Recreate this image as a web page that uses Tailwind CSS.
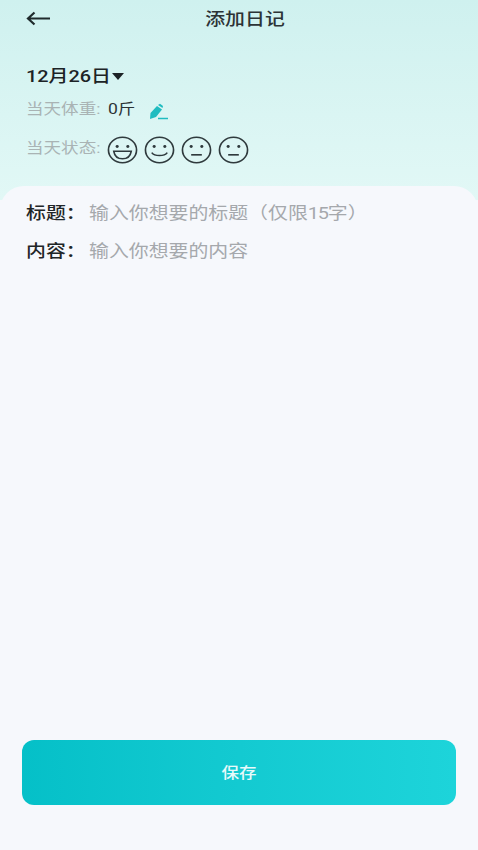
<!DOCTYPE html>
<html lang="en">
<head>
    <meta charset="UTF-8">
    <meta name="viewport" content="width=device-width, initial-scale=1.0">
    <title>添加日记</title>
    <script src="https://cdn.jsdelivr.net/npm/@tailwindcss/browser@4"></script>
</head>
<body class="bg-[#f6f8fc]">
    <div class="w-[478px] h-[850px] overflow-hidden flex flex-col font-['Roboto','Noto_Sans_CJK_SC',sans-serif] bg-gradient-to-b from-[#cff1ef] to-[#e2f8f6] bg-[length:100%_200px] bg-no-repeat">
        <!-- header -->
        <div class="relative h-[38px] flex items-center justify-center pl-[12px]">
            <svg class="absolute left-[26px] top-[11px]" width="24" height="15" viewBox="0 0 24 15" fill="none" stroke="#1f2a2c" stroke-width="2.200">
                <path d="M24 7.500H2M8.500 1.500L2 7.500L8.500 13.500" />
            </svg>
            <span class="text-[17px] font-medium text-[#2c3336] scale-x-[1.17] mt-[1px]">添加日记</span>
        </div>

        <div class="pl-[26px] pt-[26px] h-[148px]">
            <div class="flex items-center h-[24px]">
                <span class="w-[85px] shrink-0 whitespace-nowrap origin-left scale-x-[1.17] text-[17px] font-medium text-[#1c2326] leading-none">12月26日</span>
                <span class="ml-[1px] w-0 h-0 border-x-[6px] border-x-transparent border-t-[7px] border-t-[#1c2326]"></span>
            </div>
            <div class="flex items-center h-[24px] mt-[9px]">
                <span class="w-[82px] shrink-0 whitespace-nowrap origin-left scale-x-[1.17] text-[15px] text-[#a9b3b4]">当天体重:</span>
                <span class="w-[41px] shrink-0 whitespace-nowrap origin-left scale-x-[1.17] text-[15px] text-[#2c3336]">0斤</span>
                <svg class="mt-[5px]" width="20" height="18" viewBox="0 0 20 18">
                    <path d="M1 16L1.500 10L8 3L13 6.500L7 14Z" fill="#1fbcc0" />
                    <path d="M9 2L11 0.800L14 3L13.500 5Z" fill="#1fbcc0" />
                    <path d="M9 15.500H19" stroke="#1fbcc0" stroke-width="1.500" fill="none" />
                </svg>
            </div>
            <div class="flex items-start mt-[10px]">
                <span class="w-[81px] shrink-0 whitespace-nowrap origin-left scale-x-[1.17] text-[15px] text-[#a9b3b4] leading-[22px] mt-[6px]">当天状态:</span>
                <div class="flex gap-[6px] mt-[5px]">
                    <svg width="31" height="28" viewBox="0 0 32 32" preserveAspectRatio="none" fill="none" stroke="#2f3a3d" stroke-width="1.700">
                        <circle cx="16" cy="16" r="14.500" />
                        <circle cx="10.500" cy="12" r="1.600" fill="#2f3a3d" stroke="none" />
                        <circle cx="21.500" cy="12" r="1.600" fill="#2f3a3d" stroke="none" />
                        <path d="M7 17.500H25C24 24 20 26 16 26C12 26 8 24 7 17.500Z" />
                    </svg>
                    <svg width="31" height="28" viewBox="0 0 32 32" preserveAspectRatio="none" fill="none" stroke="#2f3a3d" stroke-width="1.700">
                        <circle cx="16" cy="16" r="14.500" />
                        <circle cx="10.500" cy="12" r="1.600" fill="#2f3a3d" stroke="none" />
                        <circle cx="21.500" cy="12" r="1.600" fill="#2f3a3d" stroke="none" />
                        <path d="M8 19C11 23.500 21 23.500 24 19" />
                    </svg>
                    <svg width="31" height="28" viewBox="0 0 32 32" preserveAspectRatio="none" fill="none" stroke="#2f3a3d" stroke-width="1.700">
                        <circle cx="16" cy="16" r="14.500" />
                        <circle cx="10.500" cy="12" r="1.600" fill="#2f3a3d" stroke="none" />
                        <circle cx="21.500" cy="12" r="1.600" fill="#2f3a3d" stroke="none" />
                        <path d="M10.500 21.500H21.500" stroke-width="1.900" />
                    </svg>
                    <svg width="31" height="28" viewBox="0 0 32 32" preserveAspectRatio="none" fill="none" stroke="#2f3a3d" stroke-width="1.700">
                        <circle cx="16" cy="16" r="14.500" />
                        <circle cx="10.500" cy="12" r="1.600" fill="#2f3a3d" stroke="none" />
                        <circle cx="21.500" cy="12" r="1.600" fill="#2f3a3d" stroke="none" />
                        <path d="M10.500 21.500H21.500" stroke-width="1.900" />
                    </svg>
                </div>
            </div>
        </div>

        <!-- form card -->
        <div class="flex-1 bg-[#f6f8fc] rounded-t-[24px] px-[26px] pt-[14px] flex flex-col">
            <div class="flex items-center h-[26px] mt-[1px]">
                <span class="w-[63px] shrink-0 whitespace-nowrap origin-left scale-x-[1.17] text-[17px] font-medium text-[#1f2628]">标题：</span>
                <span class="whitespace-nowrap origin-left scale-x-[1.17] text-[17px] text-[#a5a8ac]">输入你想要的标题（仅限<span class="tracking-[-1px]">15</span>字）</span>
            </div>
            <div class="flex items-center h-[26px] mt-[12px]">
                <span class="w-[63px] shrink-0 whitespace-nowrap origin-left scale-x-[1.17] text-[17px] font-medium text-[#1f2628]">内容：</span>
                <span class="whitespace-nowrap origin-left scale-x-[1.17] text-[17px] text-[#a5a8ac]">输入你想要的内容</span>
            </div>
            <div class="mt-auto mb-[45px] -mx-[4px]">
                <button class="w-[434px] h-[65px] rounded-[12px] bg-gradient-to-r from-[#05c0c8] to-[#1dd4da] text-white/90 font-medium">
                    <span class="inline-block scale-x-[1.17] text-[15px] mt-[1px]">保存</span>
                </button>
            </div>
        </div>
    </div>
</body>
</html>
